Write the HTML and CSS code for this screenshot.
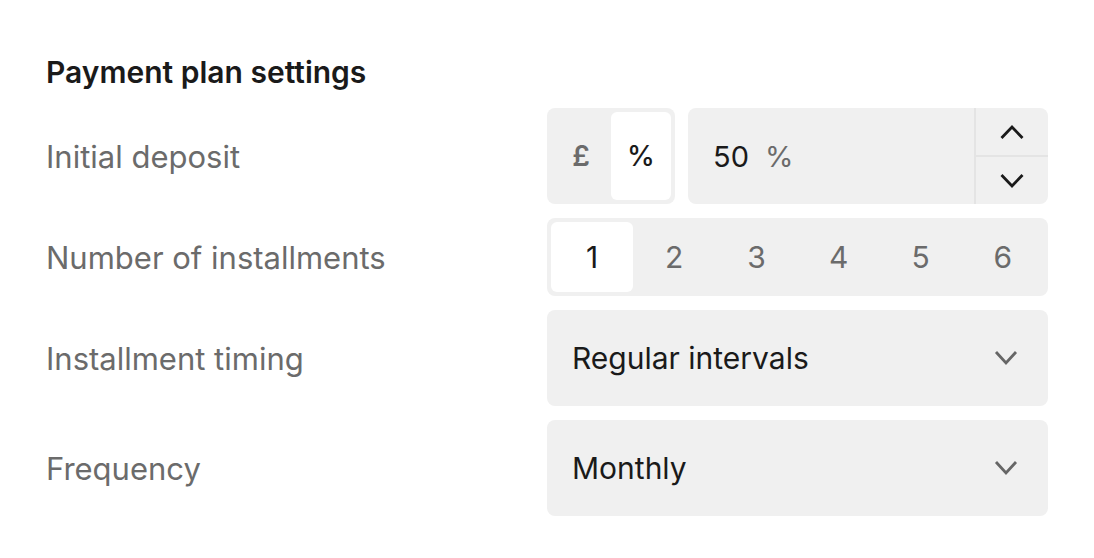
FILE: index.html
```html
<!DOCTYPE html>
<html lang="en">
<head>
<meta charset="utf-8">
<title>Payment plan settings</title>
<link rel="stylesheet" href="styles.css">
</head>
<body>
<section class="settings">
  <h2 class="settings-title">Payment plan settings</h2>

  <div class="field">
    <span class="field-label">Initial deposit</span>
    <div class="field-control deposit">
      <div class="unit-toggle">
        <button class="unit">£</button>
        <button class="unit is-active">%</button>
      </div>
      <div class="number-input">
        <div class="number-value">
          <span class="value">50</span>
          <span class="suffix">%</span>
        </div>
        <div class="stepper">
          <button class="step">
            <svg width="24" height="16" viewBox="0 0 24 16"><path d="M1.5 14 L12 3 L22.5 14" fill="none" stroke="#1a1a1a" stroke-width="2.8"/></svg>
          </button>
          <button class="step">
            <svg width="24" height="16" viewBox="0 0 24 16"><path d="M1.5 2 L12 13 L22.5 2" fill="none" stroke="#1a1a1a" stroke-width="2.8"/></svg>
          </button>
        </div>
      </div>
    </div>
  </div>

  <div class="field">
    <span class="field-label">Number of installments</span>
    <div class="field-control segmented">
      <button class="segment is-active">1</button>
      <button class="segment">2</button>
      <button class="segment">3</button>
      <button class="segment">4</button>
      <button class="segment">5</button>
      <button class="segment">6</button>
    </div>
  </div>

  <div class="field">
    <span class="field-label">Installment timing</span>
    <div class="field-control select">
      <span class="select-value">Regular intervals</span>
      <svg class="chevron" width="24" height="16" viewBox="0 0 24 16"><path d="M2 2 L12 13 L22 2" fill="none" stroke="#666" stroke-width="2.8"/></svg>
    </div>
  </div>

  <div class="field">
    <span class="field-label">Frequency</span>
    <div class="field-control select">
      <span class="select-value">Monthly</span>
      <svg class="chevron" width="24" height="16" viewBox="0 0 24 16"><path d="M2 2 L12 13 L22 2" fill="none" stroke="#666" stroke-width="2.8"/></svg>
    </div>
  </div>
</section>
</body>
</html>
```

FILE: styles.css
```css
* {
  box-sizing: border-box;
}

html, body {
  margin: 0;
  background: #ffffff;
}

body {
  font-family: Inter, "Noto Sans", sans-serif;
  color: #1a1a1a;
}

button {
  font: inherit;
  border: 0;
  background: none;
  padding: 0;
  color: inherit;
}

.settings {
  padding: 54px 46px 0 46px;
}

.settings-title {
  margin: 0 0 18px 0;
  font-size: 30px;
  line-height: 36px;
  font-weight: 600;
  color: #1a1a1a;
}

.field {
  display: grid;
  grid-template-columns: 1fr 1fr;
  align-items: center;
  margin-bottom: 14px;
}

.field-label {
  font-size: 31px;
  color: #6b6b6b;
}

/* deposit: unit toggle + number input */
.deposit {
  display: flex;
  gap: 13px;
  height: 96px;
}

.unit-toggle {
  display: flex;
  padding: 4px;
  background: #f0f0f0;
  border-radius: 8px;
}

.unit {
  width: 60px;
  border-radius: 6px;
  font-size: 28px;
  font-weight: 600;
  color: #6b6b6b;
}

.unit.is-active {
  background: #ffffff;
  color: #1a1a1a;
  font-weight: 500;
}

.number-input {
  flex: 1;
  display: flex;
  background: #f0f0f0;
  border-radius: 8px;
}

.number-value {
  flex: 1;
  display: flex;
  align-items: center;
  gap: 16px;
  padding-left: 25px;
  font-size: 29px;
}

.number-value .suffix {
  color: #6b6b6b;
}

.stepper {
  width: 74px;
  display: flex;
  flex-direction: column;
  border-left: 2px solid #e4e4e4;
}

.step {
  flex: 1;
  display: flex;
  align-items: center;
  justify-content: center;
}

.step + .step {
  border-top: 2px solid #e4e4e4;
}

/* installments */
.segmented {
  display: grid;
  grid-template-columns: repeat(6, 1fr);
  height: 78px;
  padding: 4px;
  background: #f0f0f0;
  border-radius: 8px;
}

.segment {
  border-radius: 6px;
  font-size: 30px;
  color: #6b6b6b;
}

.segment.is-active {
  background: #ffffff;
  color: #1a1a1a;
}

/* selects */
.select {
  display: flex;
  align-items: center;
  justify-content: space-between;
  height: 96px;
  padding: 0 30px 0 25px;
  background: #f0f0f0;
  border-radius: 8px;
}

.select-value {
  font-size: 30px;
  color: #1a1a1a;
}
```
